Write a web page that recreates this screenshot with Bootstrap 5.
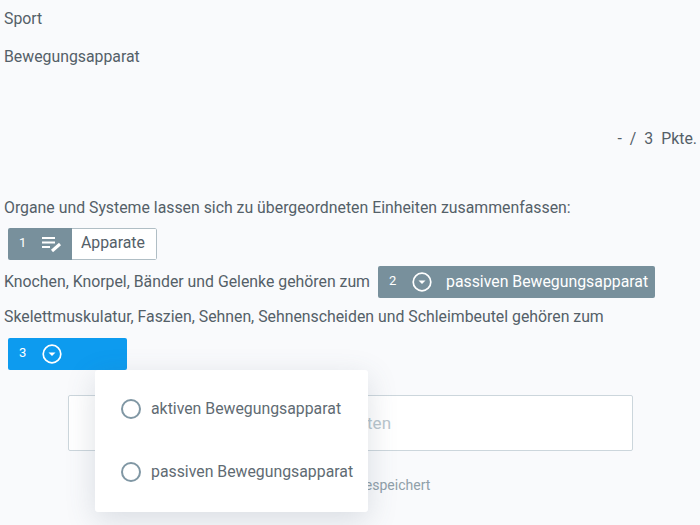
<!DOCTYPE html>
<html lang="de"><head><meta charset="utf-8"><title>Sport</title>
<link rel="stylesheet" href="https://cdn.jsdelivr.net/npm/bootstrap@5.3.0/dist/css/bootstrap.min.css">
<style>
html,body{height:525px;overflow:hidden}
body{background:#f9fafc;color:#546068;font-family:Roboto,"Liberation Sans",sans-serif;font-size:15.83px;line-height:24px}
.page{padding:7px 3px 0 4px;position:relative;height:525px}
.crumb{margin-bottom:14px}
.points{margin-top:58px;margin-bottom:45px;gap:8px}
.tag{display:inline-flex;align-items:stretch;height:32px;border-radius:2px;overflow:hidden}
.tag-num{font-size:13px;margin-right:15px;position:relative;top:-1px;width:8px}
.tag-head{display:flex;align-items:center;padding-left:11px;color:#fff}
.tag-grey{background:#78909c;color:#fff}
.tag-first{padding-right:10px}
.tag-open{background:#0d9bef;color:#fff;width:119px}
.answer{background:#fff;border:1px solid #b0bec5;border-left:0;border-radius:0 2px 2px 0;color:#546068;display:flex;align-items:center;padding:0 11px 2px 9px}
.line-one{margin-top:8px}
.line-two{margin-top:6px;height:32px}
.line-two .tag{margin-left:8px}
.line-two .tag-head{padding-right:7px}
.tag-label{margin-left:14px}
.line-three{margin-top:7px}
.line-four{margin-top:9px}
.savebtn{display:block;width:565px;height:56px;margin:25px 0 0 64px;background:#fff;border:1px solid #ccd6dc;border-radius:2px;color:#b9c6cd;font-size:17px;line-height:52px;text-align:center}
.status{text-align:center;font-size:14px;line-height:20px;color:#90a0a9;margin:24px 0 0 0;padding-right:1px}
.dropmenu{position:absolute;left:95px;top:370px;width:273px;height:142px;background:#fff;border-radius:3px;box-shadow:0 8px 30px rgba(70,90,110,.18);padding:7px 0 0 26px;display:flex;flex-direction:column}
.opt{display:flex;align-items:center;height:63px;gap:10px;color:#5f6b73}
.ring{width:20px;height:20px;border:2px solid #8097a4;border-radius:50%;flex:none}
</style></head><body>
<main class="page">
  <div class="crumb">Sport</div>
  <div class="crumb">Bewegungsapparat</div>
  <div class="points d-flex justify-content-end"><span>-</span><span>/</span><span>3</span><span>Pkte.</span></div>
  <div>Organe und Systeme lassen sich zu übergeordneten Einheiten zusammenfassen:</div>
  <div class="line-one ms-1 d-flex">
    <span class="tag">
      <span class="tag-head tag-grey tag-first"><span class="tag-num">1</span>
        <svg width="20" height="18" viewBox="0 0 20 18" fill="none" stroke="#fff" stroke-width="2"><path d="M0 3h13M0 7.5h13M0 12h8"/><path d="M10 16l8-7" stroke-width="3"/></svg>
      </span>
      <span class="answer">Apparate</span>
    </span>
  </div>
  <div class="line-two d-flex align-items-center">Knochen, Knorpel, Bänder und Gelenke gehören zum
    <span class="tag">
      <span class="tag-head tag-grey"><span class="tag-num">2</span>
        <svg width="20" height="20" viewBox="0 0 20 20"><circle cx="10" cy="10" r="8.8" fill="none" stroke="#fff" stroke-width="1.7"/><path d="M6.5 8.5h7L10 12z" fill="#fff"/></svg>
        <span class="tag-label">passiven Bewegungsapparat</span>
      </span>
    </span>
  </div>
  <div class="line-three">Skelettmuskulatur, Faszien, Sehnen, Sehnenscheiden und Schleimbeutel gehören zum</div>
  <div class="line-four ms-1 d-flex">
    <span class="tag tag-open">
      <span class="tag-head"><span class="tag-num">3</span>
        <svg width="20" height="20" viewBox="0 0 20 20"><circle cx="10" cy="10" r="8.8" fill="none" stroke="#fff" stroke-width="1.7"/><path d="M6.5 8.5h7L10 12z" fill="#fff"/></svg>
      </span>
    </span>
  </div>
  <button type="button" class="savebtn">Auswerten</button>
  <div class="status">Antwort nicht gespeichert</div>
  <div class="dropmenu">
    <label class="opt"><span class="ring"></span>aktiven Bewegungsapparat</label>
    <label class="opt"><span class="ring"></span>passiven Bewegungsapparat</label>
  </div>
</main>
<script src="https://cdn.jsdelivr.net/npm/bootstrap@5.3.0/dist/js/bootstrap.bundle.min.js"></script>
</body></html>
